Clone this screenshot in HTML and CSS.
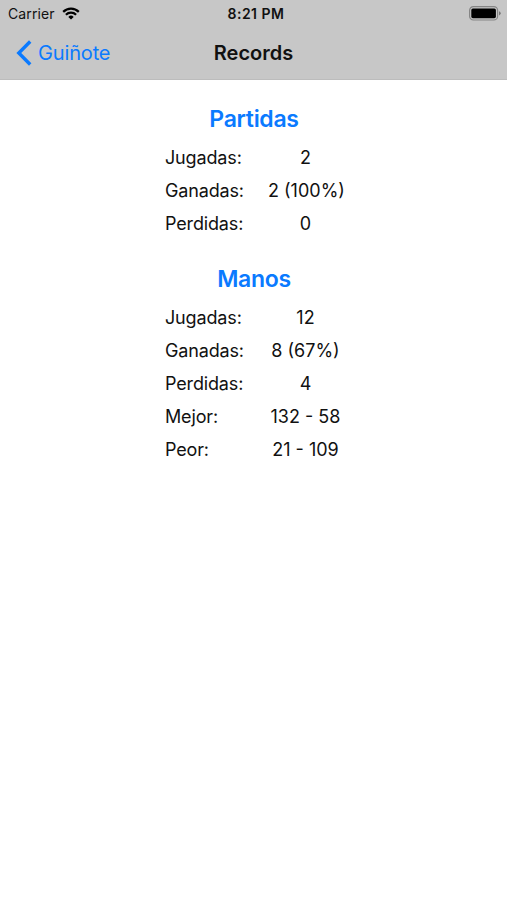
FILE: index.html
```html
<!DOCTYPE html>
<html lang="es">
<head>
    <meta charset="UTF-8">
    <meta name="viewport" content="width=device-width, initial-scale=1.0">
    <title>Records</title>
    <link rel="stylesheet" href="styles.css">
</head>
<body>

    <header>
        <div class="status-bar">
            <div class="carrier">
                <span>Carrier</span>
                <svg class="wifi" viewBox="0 0 18 13" width="18" height="13">
                    <path d="M1.2 4.9a11 11 0 0 1 15.6 0M3.9 7.8a7.2 7.2 0 0 1 10.2 0" fill="none" stroke="#000" stroke-width="2.2"/>
                    <path d="M9 12.6L6.3 9.9a3.8 3.8 0 0 1 5.4 0z"/>
                </svg>
            </div>
            <span class="time">8:21 PM</span>
            <svg class="battery" viewBox="0 0 33 15" width="33" height="15">
                <rect x="0.6" y="0.6" width="28" height="13.4" rx="3.8" fill="none" stroke="#858585" stroke-width="1.2"/>
                <rect x="2.3" y="2.4" width="24.6" height="9.8" rx="1.6"/>
                <path d="M30 5.2v4.2q1.7-.7 1.7-2.1t-1.7-2.1z" fill="#777"/>
            </svg>
        </div>
        <nav class="nav-bar">
            <a href="#" class="back">
                <svg viewBox="0 0 16 26" width="16" height="26">
                    <path d="M14.2 1.5L2.8 13l11.4 11.5" fill="none" stroke="#0a7aff" stroke-width="3.4"/>
                </svg>
                <span>Guiñote</span>
            </a>
            <h1>Records</h1>
        </nav>
    </header>

    <main>
        <section>
            <h2>Partidas</h2>
            <dl>
                <dt>Jugadas:</dt><dd>2</dd>
                <dt>Ganadas:</dt><dd>2 (100%)</dd>
                <dt>Perdidas:</dt><dd>0</dd>
            </dl>
        </section>
        <section>
            <h2>Manos</h2>
            <dl>
                <dt>Jugadas:</dt><dd>12</dd>
                <dt>Ganadas:</dt><dd>8 (67%)</dd>
                <dt>Perdidas:</dt><dd>4</dd>
                <dt>Mejor:</dt><dd>132 - 58</dd>
                <dt>Peor:</dt><dd>21 - 109</dd>
            </dl>
        </section>
    </main>

</body>
</html>
```
FILE: styles.css
```css
body {
    font-family: Inter, "Liberation Sans", sans-serif;
    margin: 0;
    background-color: #fff;
    color: #111;
}

header {
    background-color: #c7c7c7;
    height: 80px;
    border-bottom: 1px solid #bcbcbc;
    box-sizing: border-box;
}

.status-bar {
    display: grid;
    grid-template-columns: 1fr auto 1fr;
    align-items: center;
    height: 27px;
    padding: 0 5px 0 8px;
    font-size: 14px;
}

.carrier {
    display: flex;
    align-items: center;
    gap: 7px;
    letter-spacing: 0.1px;
}

.time {
    margin-left: 2px;
    font-weight: 600;
    letter-spacing: 0.5px;
}

.battery {
    justify-self: end;
}

.nav-bar {
    display: grid;
    grid-template-columns: 1fr auto 1fr;
    align-items: center;
    height: 52px;
    padding: 0 16px;
}

.back {
    display: flex;
    align-items: center;
    gap: 6px;
    color: #0a7aff;
    font-size: 20px;
    letter-spacing: -0.15px;
    text-decoration: none;
}

h1 {
    margin: 0;
    font-size: 20px;
    font-weight: 600;
}

section {
    display: flex;
    flex-direction: column;
    align-items: center;
    padding-top: 24px;
}

h2 {
    margin: 0 0 6px 1px;
    color: #0a7aff;
    font-size: 23px;
    font-weight: 600;
    letter-spacing: -0.3px;
    line-height: 31px;
}

dl {
    display: grid;
    grid-template-columns: 103px 75px;
    margin: 0 0 0 1px;
    font-size: 18px;
    line-height: 33px;
}

dt,
dd {
    margin: 0;
    white-space: nowrap;
}

dt {
    letter-spacing: -0.15px;
}

dd {
    text-align: center;
}
```
